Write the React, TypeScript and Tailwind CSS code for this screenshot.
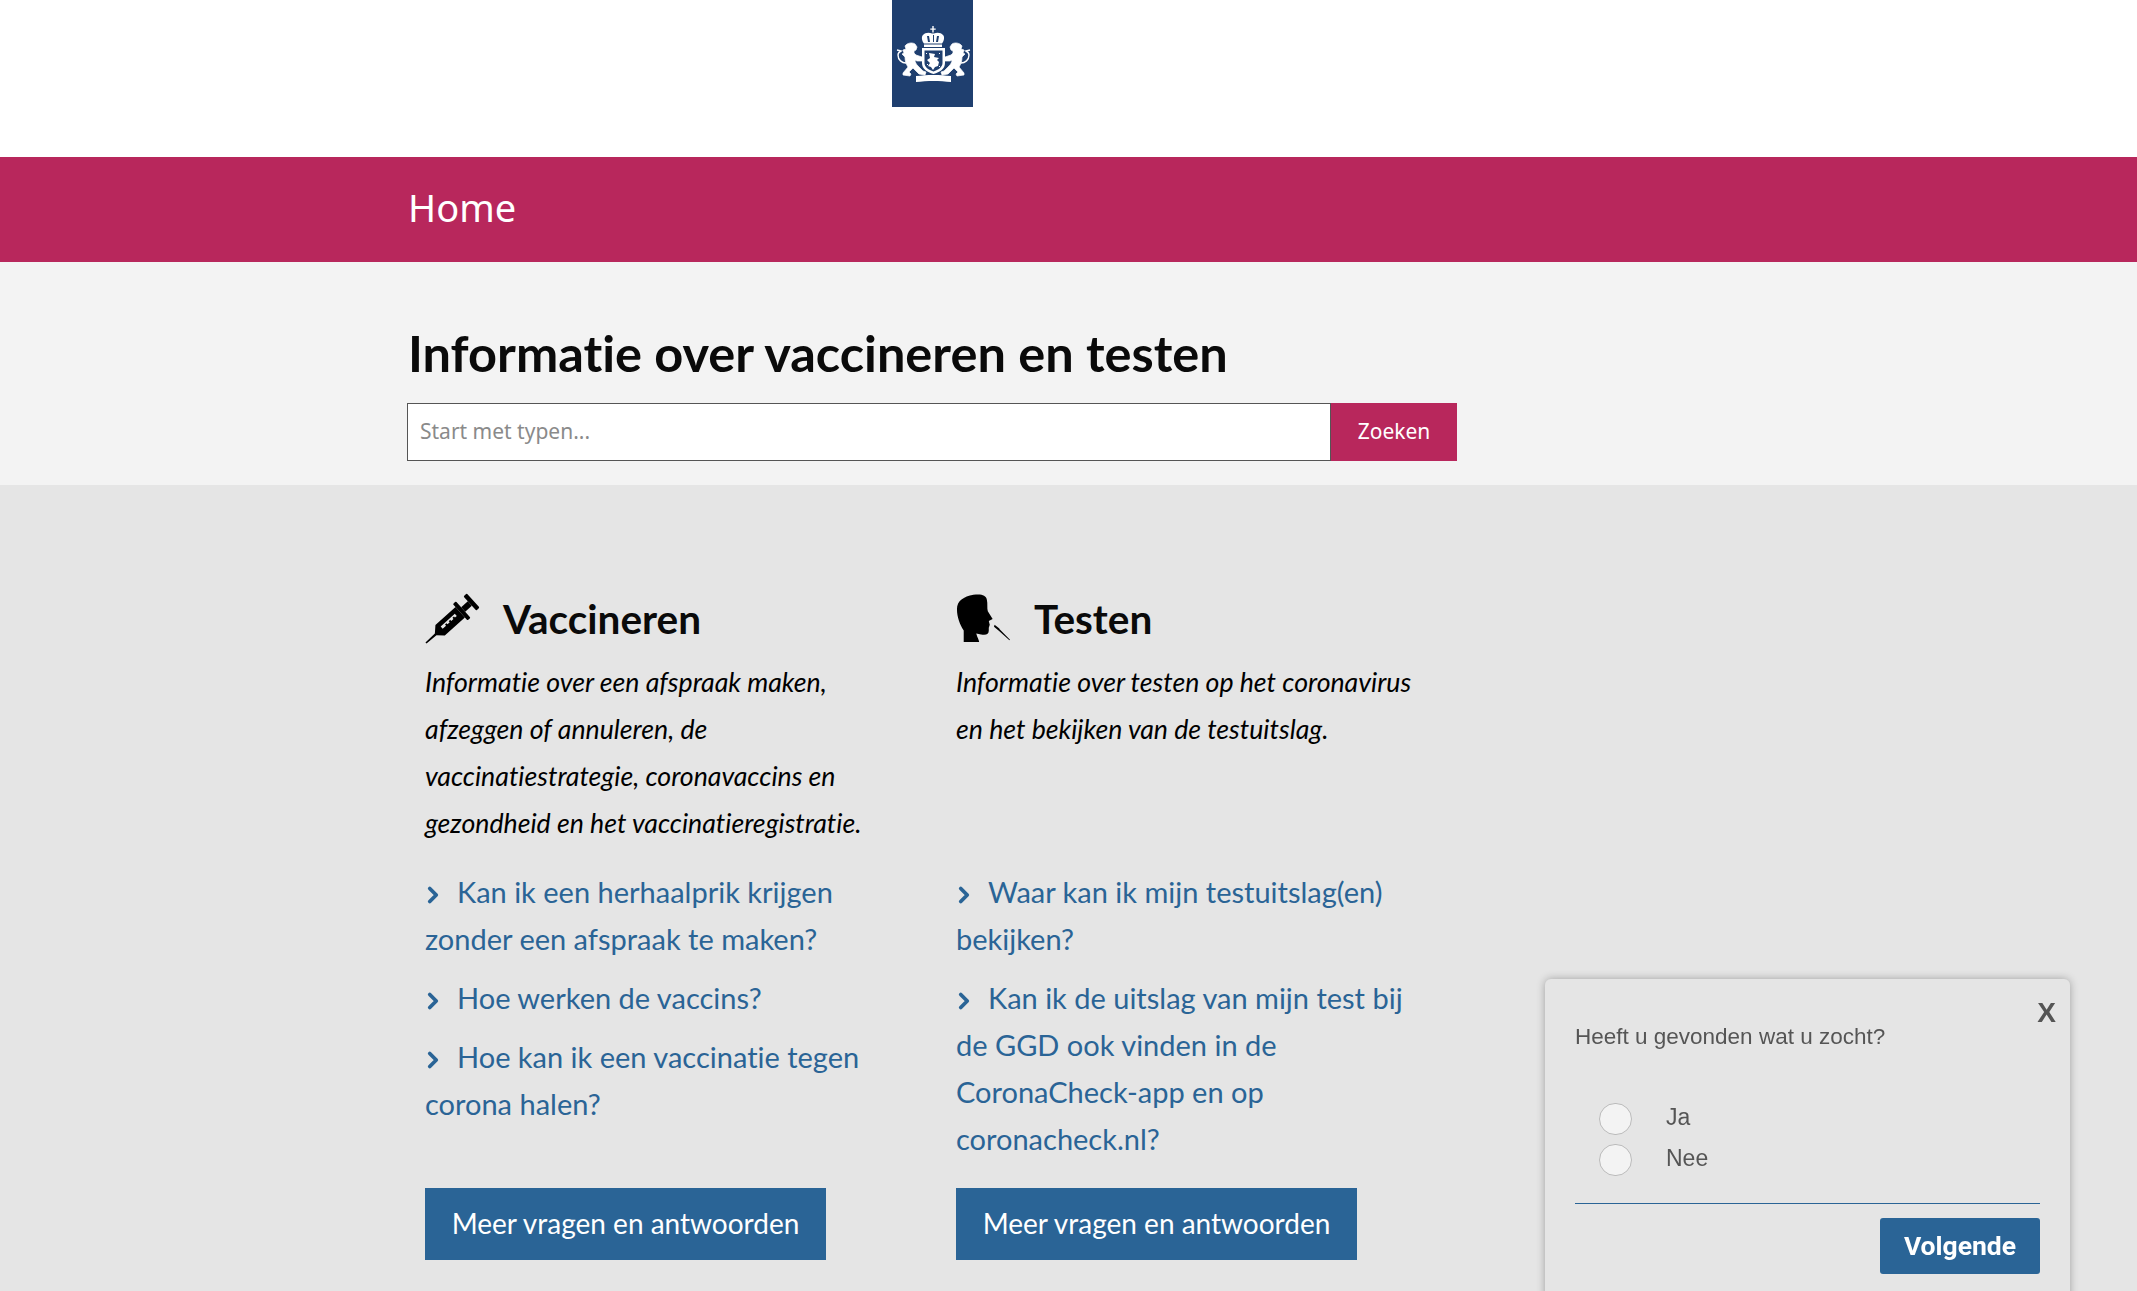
import type { ReactNode } from "react";
import { ChevronRight } from "lucide-react";

function Lion() {
  return (
    <g stroke="#fff" strokeWidth="0.7">
      <path d="M13 46c2-3 7-4 10-2l2 3-1 3-2 1 0 2 2 2 6 2 0 4-5 0-2-1c0 2 1 4 3 6l5 5 3 1-1 3-6-1-6-6-4 4 2 2-1 2-7-1 0-2 5-6c-2-3-3-6-3-10l-3-3 2-1-1-3 3-1z" />
      <path fill="none" strokeWidth="1.400" d="M14 63c-4 0-8-3-8-8 0-2 1-3 3-4l-4-1" />
    </g>
  );
}

function Crest() {
  return (
    <svg viewBox="0 0 81 107" className="h-[107px] w-[81px]" fill="#fff">
      {/* crown */}
      <path d="M40.300 26h1.400v2.500h2v1.300h-2v2.700h-1.400v-2.700h-2v-1.300h2z" />
      <path fillRule="evenodd" d="M31 35c2-2.500 6-3 9-1.500h2c3-1.500 7-1 9 1.500 2 2 1 6-1 8.500h-18c-2-2.500-3-6.500-1-8.500zM35 36l1 6h2l-1-6zM41 35v7h1v-7zM47 36l-1 6h-2l1-6z" />
      <rect x="32" y="44.500" width="18" height="2.500" />
      {/* shield */}
      <path fillRule="evenodd" d="M30 48h23v15c0 6-5 9-11.500 11-6.500-2-11.500-5-11.500-11zM32.500 50.500v12.500c0 4 4 7 9 8.500 5-1.500 9-4.500 9-8.500v-12.500z" />
      <path d="M37 53l6 1-1 3 5 1-2 2 2 2-1 4-3 1-2 3-2-3-3-1 2-3-3-3 3-2z" />
      <path d="M34 53h1v1h-1zM47 53h1v1h-1zM35 64h1v1h-1zM47 66h1v1h-1z" />
      <Lion />
      <g transform="matrix(-1 0 0 1 83 0)">
        <Lion />
      </g>
      {/* ribbon */}
      <path d="M24 76c11-1.500 24-1.500 35 0v6c-11-1.500-24-1.500-35 0z" />
    </svg>
  );
}

function Syringe() {
  return (
    <svg viewBox="0 0 60 54" className="h-[54px] w-[60px]" fill="#000">
      <g transform="translate(1 52) rotate(-42)">
        <path d="M0-.8L13-1.200L19-7H46V7H19L13 1.200L0 .8z" />
        <path fill="#e5e5e5" d="M22-2h19v3h-2.500v-1.500h-2v1.500h-3v-1.500h-2v1.500h-3v-1.500h-2v1.500h-4.500z" transform="translate(0 -.5)" />
        <rect x="46" y="-11" width="4" height="22" rx="1" />
        <rect x="50" y="-3" width="9" height="6" />
        <rect x="59" y="-9.500" width="4.500" height="19" rx="1" />
      </g>
    </svg>
  );
}

function Head() {
  return (
    <svg viewBox="0 0 56 50" className="h-[50px] w-[54px]" fill="#000">
      <path d="M8 50V38C4 32 1 24 1 16 1 7 8 3 18 1c8-1 13 0 14 5 1 4 0 9 1 12l5 8-4 2 1 4-1 3 0 3c0 4-3 5-8 4l-5-1c1 4 3 7 3 9z" />
      <path d="M40 32l5 4 0 .5 11 11-.6.6-11-10-5-4z" />
    </svg>
  );
}

function QuestionLink({ children }: { children: ReactNode }) {
  return (
    <p className="mb-3 text-[29px] leading-[47px] text-[#2a6496]">
      <ChevronRight size={26} strokeWidth={3.5} className="mr-[11px] -ml-[5px] inline-block align-[-5px]" />
      {children}
    </p>
  );
}

function TopicColumn(props: { icon: ReactNode; title: string; intro: string; links: ReactNode[] }) {
  return (
    <div className="flex w-[531px] flex-col pr-[56px]">
      <div className="-mt-[2px] flex h-[66px] items-center">
        <div className="w-[78px] shrink-0">{props.icon}</div>
        <h2 className="pt-[2px] text-[40.5px] leading-none font-bold text-[#0a0a0a]">{props.title}</h2>
      </div>
      <p className="mt-[6px] h-[214px] pt-[2px] text-[26.7px] leading-[47px] text-black italic">{props.intro}</p>
      <div className="-mt-[3px] mb-[14px]">
        {props.links.map((l, i) => (
          <QuestionLink key={i}>{l}</QuestionLink>
        ))}
      </div>
      <a className="mt-auto flex h-[72px] w-[401px] items-center justify-center bg-[#2a6496] pb-[2px] text-[28px] text-white">
        Meer vragen en antwoorden
      </a>
    </div>
  );
}

export default function App() {
  return (
    <div className="h-[1291px] overflow-hidden bg-[#e5e5e5] font-['Lato',sans-serif] [font-variant-ligatures:none]">
      {/* HEADER */}
      <header className="h-[157px] bg-white pl-[892px]">
        <div className="h-[107px] w-[81px] bg-[#1f3f6f]">
          <Crest />
        </div>
      </header>
      <div className="flex h-[105px] items-center bg-[#b8275c] pb-[4px] pl-[408px] font-['Noto_Sans',sans-serif] text-[38px] text-white">
        Home
      </div>

      {/* SEARCH */}
      <section className="h-[223px] bg-[#f3f3f3] pt-[59px] pl-[407px]">
        <h1 className="pl-[1px] text-[50.5px] leading-[64px] font-bold text-[#0a0a0a]">
          Informatie over vaccineren en testen
        </h1>
        <div className="mt-[18px] flex h-[58px] w-[1050px]">
          <input
            placeholder="Start met typen..."
            className="h-full flex-1 border border-[#555] bg-white px-3 pb-[2px] font-['Noto_Sans',sans-serif] text-[21px] outline-none placeholder:text-[#8a8a8a]"
          />
          <button className="h-full w-[126px] bg-[#b8275c] font-['Noto_Sans',sans-serif] text-[21px] text-white">
            Zoeken
          </button>
        </div>
      </section>

      {/* TOPICS */}
      <main className="flex pt-[102px] pl-[425px]">
        <TopicColumn
          icon={<Syringe />}
          title="Vaccineren"
          intro="Informatie over een afspraak maken, afzeggen of annuleren, de vaccinatiestrategie, coronavaccins en gezondheid en het vaccinatieregistratie."
          links={[
            "Kan ik een herhaalprik krijgen zonder een afspraak te maken?",
            "Hoe werken de vaccins?",
            "Hoe kan ik een vaccinatie tegen corona halen?",
          ]}
        />
        <TopicColumn
          icon={<Head />}
          title="Testen"
          intro="Informatie over testen op het coronavirus en het bekijken van de testuitslag."
          links={[
            "Waar kan ik mijn testuitslag(en) bekijken?",
            <>
              Kan ik de uitslag van mijn test bij de GGD ook vinden in de
              <br />
              CoronaCheck-app en op coronacheck.nl?
            </>,
          ]}
        />
      </main>

      {/* FEEDBACK WIDGET */}
      <div className="fixed top-[979px] left-[1545px] h-[340px] w-[525px] rounded-md bg-[#e5e5e5] px-[30px] font-['Liberation_Sans',sans-serif] text-[#555] shadow-[0_0_8px_rgba(0,0,0,0.3)]">
        <button className="absolute top-[20px] right-[14px] text-[28px] leading-none font-bold">X</button>
        <p className="pt-[44px] text-[22.5px] leading-[28px]">Heeft u gevonden wat u zocht?</p>
        <div className="mt-[52px] flex flex-col gap-[9px] pl-[24px] text-[23px]">
          <label className="flex h-[32px] items-start">
            <span className="h-[32px] w-[33px] rounded-full border border-[#bbb] bg-[#f3f3f3]" />
            <span className="mt-[1px] ml-[34px] leading-[26px]">Ja</span>
          </label>
          <label className="flex h-[32px] items-start">
            <span className="h-[32px] w-[33px] rounded-full border border-[#bbb] bg-[#f3f3f3]" />
            <span className="mt-[1px] ml-[34px] leading-[26px]">Nee</span>
          </label>
        </div>
        <div className="mt-[27px] border-t border-[#2a6496]" />
        <div className="mt-[14px] flex justify-end">
          <button className="h-[56px] w-[160px] rounded-[3px] bg-[#2a6496] font-['Roboto',sans-serif] text-[26.5px] font-bold text-white">
            Volgende
          </button>
        </div>
      </div>
    </div>
  );
}
